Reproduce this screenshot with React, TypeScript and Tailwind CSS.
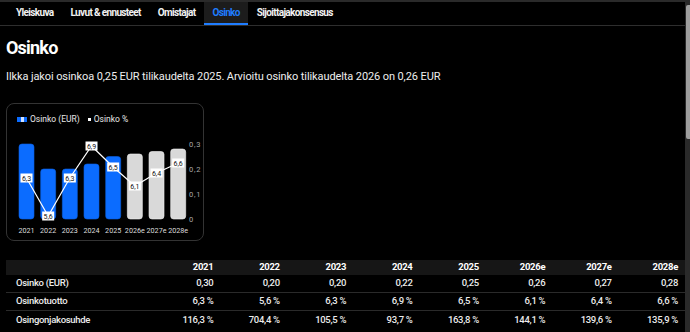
import React from "react";

const years = ["2021", "2022", "2023", "2024", "2025", "2026e", "2027e", "2028e"];
const eur = [0.3, 0.2, 0.2, 0.22, 0.25, 0.26, 0.27, 0.28];
const pctLabels = ["6,3", "5,6", "6,3", "6,9", "6,5", "6,1", "6,4", "6,6"];
const pctY = [47, 85, 47, 15, 36, 55, 42, 32];

const rows = [
  { label: "Osinko (EUR)", vals: ["0,30", "0,20", "0,20", "0,22", "0,25", "0,26", "0,27", "0,28"] },
  { label: "Osinkotuotto", vals: ["6,3 %", "5,6 %", "6,3 %", "6,9 %", "6,5 %", "6,1 %", "6,4 %", "6,6 %"] },
  { label: "Osingonjakosuhde", vals: ["116,3 %", "704,4 %", "105,5 %", "93,7 %", "163,8 %", "144,1 %", "139,6 %", "135,9 %"] },
];

const roboto = { fontFamily: "Roboto, sans-serif" } as const;

function Chart() {
  const pitch = 21.67;
  const x0 = 13;
  const base = 88;
  return (
    <svg width={198} height={108} viewBox="0 0 198 108" style={roboto}>
      {eur.map((v, i) => {
        const h = v * 250;
        const x = x0 + i * pitch;
        const est = i >= 5;
        return (
          <rect
            key={i}
            x={x}
            y={base - h}
            width={15}
            height={h}
            rx={3}
            fill={est ? "#d9d9d9" : "#0b6cff"}
            stroke={est ? "#f2f2f2" : "#0a5fe0"}
            strokeWidth={0.6}
          />
        );
      })}
      <polyline
        points={pctY.map((y, i) => `${x0 + i * pitch + 7.5},${y}`).join(" ")}
        fill="none"
        stroke="#ffffff"
        strokeWidth={1.2}
      />
      {pctY.map((y, i) => {
        const cx = x0 + i * pitch + 7.5;
        return (
          <g key={i}>
            <rect x={cx - 6} y={y - 4.5} width={12} height={9} fill="#ffffff" />
            <text x={cx} y={y + 2.5} fontSize={7} textAnchor="middle" fill="#111">
              {pctLabels[i]}
            </text>
          </g>
        );
      })}
      {["0,3", "0,2", "0,1", "0"].map((t, i) => (
        <text key={t} x={183} y={13 + i * 25 + 2.5} fontSize={7.5} fill="#a8a8a8" letterSpacing={0.8}>
          {t}
        </text>
      ))}
      {years.map((y, i) => (
        <text key={y} x={x0 + i * pitch + 7.5} y={102} fontSize={7.2} textAnchor="middle" fill="#dcdcdc">
          {y}
        </text>
      ))}
    </svg>
  );
}

export default function App() {
  const tabs = ["Yleiskuva", "Luvut & ennusteet", "Omistajat", "Osinko", "Sijoittajakonsensus"];
  return (
    <div className="w-[690px] h-[332px] overflow-hidden bg-black text-[#f0f0f0] flex flex-col" style={roboto}>
      <div className="h-[2px] bg-[#2a2a2a] shrink-0" />
      <div className="flex flex-1 min-h-0">
        <div className="flex-1 min-w-0 flex flex-col">
          <div className="flex h-[24px] border-b border-[#2e2e2e] pl-[7.5px] shrink-0">
            {tabs.map((t) => {
              const active = t === "Osinko";
              return (
                <div
                  key={t}
                  className={
                    "px-[8.5px] flex items-center text-[10px] tracking-[-0.65px] font-bold border-b-2 " +
                    (active ? "bg-[#1c1c1c] text-[#1f7dff] border-[#1f7dff]" : "text-[#f2f2f2] border-transparent")
                  }
                >
                  {t}
                </div>
              );
            })}
          </div>
          <h1 className="mt-[11px] ml-[6px] text-[18px] leading-[22px] tracking-[-0.8px] font-bold text-white">
            Osinko
          </h1>
          <p className="mt-[11px] ml-[6px] text-[11px] leading-[14px] tracking-[-0.1px] text-[#eeeeee]">
            Ilkka jakoi osinkoa 0,25 EUR tilikaudelta 2025. Arvioitu osinko tilikaudelta 2026 on 0,26 EUR
          </p>
          <div className="mt-[19px] ml-[6px] w-[198px] h-[138px] rounded-[8px] border border-[#333333] flex flex-col">
            <div className="flex items-center h-[12px] mt-[9px] pl-[10px] text-[8.5px] text-[#e8e8e8]">
              <span className="w-[10px] h-[5px] bg-[#0b6cff] flex justify-center mr-[3px]">
                <span className="w-[3px] h-[5px] bg-[#cfe0ff]" />
              </span>
              <span>Osinko (EUR)</span>
              <span className="w-[3px] h-[3px] bg-white ml-[8px] mr-[3px]" />
              <span>Osinko %</span>
            </div>
            <div className="mt-[6px] -ml-px">
              <Chart />
            </div>
          </div>
          <div className="mt-[19px] ml-[6px] text-[9.5px] tracking-[-0.3px]">
            <div className="grid grid-cols-[148px_repeat(8,1fr)] h-[15px] bg-[#161616] items-center font-bold text-white">
              <div />
              {years.map((y) => (
                <div key={y} className="text-right pr-[7px]">{y}</div>
              ))}
            </div>
            {rows.map((r, ri) => (
              <div
                key={r.label}
                className={
                  "grid grid-cols-[148px_repeat(8,1fr)] h-[18px] items-center font-medium text-[#ececec] " +
                  (ri < rows.length - 1 ? "border-b border-[#2a2a2a]" : "")
                }
              >
                <div className="pl-[10px]">{r.label}</div>
                {r.vals.map((v, i) => (
                  <div key={i} className="text-right pr-[7px]">{v}</div>
                ))}
              </div>
            ))}
          </div>
        </div>
        <div className="w-[5px] bg-[#2a2a2a] shrink-0 flex justify-end pt-[3px]">
          <div className="w-[4px] h-[134px] bg-[#9e9e9e] rounded-l-[2px]" />
        </div>
      </div>
    </div>
  );
}
